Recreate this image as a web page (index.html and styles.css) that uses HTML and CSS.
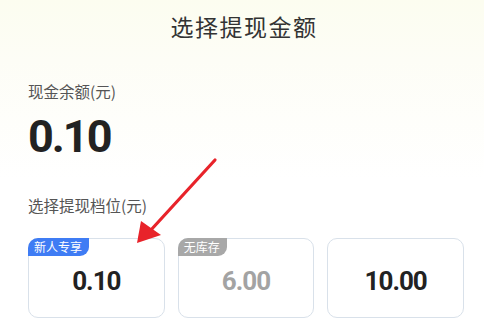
FILE: index.html
```html
<!DOCTYPE html>
<html>
<head>
<meta charset="utf-8">
<link rel="stylesheet" href="styles.css">
</head>
<body>
<div class="page">
  <div class="header">选择提现金额</div>
  <div class="content">
    <div class="label">现金余额(元)</div>
    <div class="balance">0.10</div>
    <div class="label label2">选择提现档位(元)</div>
    <div class="cards">
      <div class="card">
        <span class="badge badge-new">新人专享</span>
        <span class="amount">0.10</span>
      </div>
      <div class="card">
        <span class="badge badge-out">无库存</span>
        <span class="amount amount-dim">6.00</span>
      </div>
      <div class="card">
        <span class="amount">10.00</span>
      </div>
    </div>
  </div>
  <svg class="arrow" width="484" height="321" viewBox="0 0 484 321">
    <line x1="215" y1="160" x2="150" y2="231" stroke="#e8232a" stroke-width="3.2" stroke-linecap="round"/>
    <polygon points="137,243 141,221 161,235" fill="#e8232a"/>
  </svg>
</div>
</body>
</html>
```
FILE: styles.css
```css
html, body {
  margin: 0;
  padding: 0;
}
body {
  width: 484px;
  height: 321px;
  overflow: hidden;
  font-family: "Noto Sans CJK SC", "Noto Sans", sans-serif;
  background: linear-gradient(180deg, #fcfdf0 0px, #fdfdf6 60px, #ffffff 180px);
}
.page {
  position: relative;
  width: 484px;
  height: 321px;
}
.header {
  height: 52px;
  display: flex;
  align-items: center;
  justify-content: center;
  font-size: 23px;
  color: #333;
  letter-spacing: 1.5px;
  padding-left: 4px;
}
.content {
  padding: 0 20px 0 28px;
}
.label {
  margin-top: 29px;
  font-size: 15.5px;
  line-height: 20px;
  color: #555;
}
.balance {
  margin-top: 13px;
  font-family: Roboto, "Liberation Sans", sans-serif;
  font-weight: 700;
  font-size: 45px;
  line-height: 46px;
  color: #222;
  letter-spacing: -2px;
}
.label2 {
  margin-top: 35px;
}
.cards {
  margin-top: 23px;
  display: flex;
  gap: 13px;
}
.card {
  position: relative;
  width: 137px;
  height: 80px;
  box-sizing: border-box;
  border: 1px solid #d9e1ea;
  border-radius: 10px;
  display: flex;
  align-items: center;
  justify-content: center;
  background: #fff;
}
.badge {
  position: absolute;
  left: -1px;
  top: -1px;
  height: 18px;
  padding: 0 7px 0 6px;
  font-size: 12px;
  line-height: 18px;
  color: #fff;
  border-radius: 10px 0 9px 0;
}
.badge-new {
  background: #3f7cf4;
}
.badge-out {
  background: #a8a8a8;
}
.amount {
  font-family: Roboto, "Liberation Sans", sans-serif;
  font-weight: 700;
  font-size: 26px;
  color: #222;
  margin-top: 6px;
  letter-spacing: -1px;
}
.amount-dim {
  color: #a3a3a3;
}
.arrow {
  position: absolute;
  left: 0;
  top: 0;
  pointer-events: none;
}
```
